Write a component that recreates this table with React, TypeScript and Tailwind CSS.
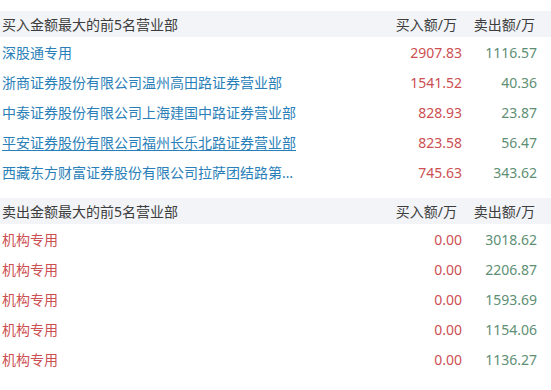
import React from "react";

const buys = [
  { name: "深股通专用", buy: "2907.83", sell: "1116.57" },
  { name: "浙商证券股份有限公司温州高田路证券营业部", buy: "1541.52", sell: "40.36" },
  { name: "中泰证券股份有限公司上海建国中路证券营业部", buy: "828.93", sell: "23.87" },
  { name: "平安证券股份有限公司福州长乐北路证券营业部", buy: "823.58", sell: "56.47", hover: true },
  { name: "西藏东方财富证券股份有限公司拉萨团结路第二证券营业部", buy: "745.63", sell: "343.62" },
];

const sells = [
  { name: "机构专用", buy: "0.00", sell: "3018.62" },
  { name: "机构专用", buy: "0.00", sell: "2206.87" },
  { name: "机构专用", buy: "0.00", sell: "1593.69" },
  { name: "机构专用", buy: "0.00", sell: "1154.06" },
  { name: "机构专用", buy: "0.00", sell: "1136.27" },
];

type Row = { name: string; buy: string; sell: string; hover?: boolean };

function Section({ title, rows, inst }: { title: string; rows: Row[]; inst?: boolean }) {
  return (
    <div className="mt-[11px]">
      <div className="flex h-[26px] items-center bg-[#f2f4f7] pl-[2px] pr-[16px] text-[14px] text-[#3d3d3d]">
        <div className="flex-1">{title}</div>
        <div className="w-[75px] text-right">买入额/万</div>
        <div className="w-[78px] text-right">卖出额/万</div>
      </div>
      {rows.map((r, i) => (
        <div key={i} className="flex h-[30px] items-center pl-[2px] pr-[14px] text-[14px]">
          <div className="flex-1 min-w-0">
            <div
              className={
                "w-[298px] truncate " +
                (inst ? "text-[#cc4f52]" : "text-[#2b7fb8]") +
                (r.hover ? " underline decoration-[#2b7fb8] underline-offset-[2px]" : "")
              }
            >
              {r.name}
            </div>
          </div>
          <div className="w-[75px] text-right text-[#cc4f52]">{r.buy}</div>
          <div className="w-[75px] text-right text-[#5e8f74]">{r.sell}</div>
        </div>
      ))}
    </div>
  );
}

export default function App() {
  return (
    <div
      className="w-[551px] h-[390px] overflow-hidden bg-white"
      style={{ fontFamily: '"Noto Sans", "Noto Sans CJK SC", sans-serif' }}
    >
      <Section title="买入金额最大的前5名营业部" rows={buys} />
      <Section title="卖出金额最大的前5名营业部" rows={sells} inst />
    </div>
  );
}
